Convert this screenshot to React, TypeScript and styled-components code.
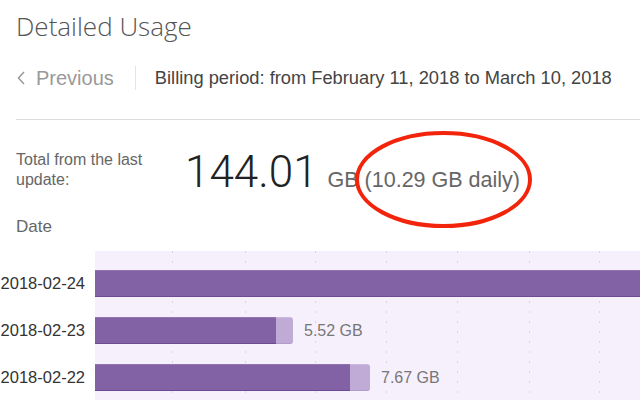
import React from 'react';
import styled, { createGlobalStyle } from 'styled-components';

const GlobalStyle = createGlobalStyle`
  html, body {
    margin: 0;
    padding: 0;
    background: #fff;
    overflow: hidden;
  }
  body {
    font-family: 'Liberation Sans', Arial, sans-serif;
    color: #444;
  }
`;

const Page = styled.div`
  position: relative;
  width: 640px;
  height: 400px;
  overflow: hidden;
  box-sizing: border-box;
  padding: 11px 0 0 16px;
`;

const Title = styled.h1`
  margin: 0;
  font-family: 'Open Sans', 'Liberation Sans', sans-serif;
  font-weight: 300;
  font-size: 26px;
  line-height: 30px;
  color: #555;
`;

const NavRow = styled.div`
  display: flex;
  align-items: center;
  height: 24px;
  margin-top: 25px;
`;

const PrevLink = styled.a`
  display: flex;
  align-items: center;
  gap: 11px;
  font-size: 20px;
  color: #999;
  text-decoration: none;
  cursor: pointer;
  padding-left: 1px;
`;

const Separator = styled.div`
  width: 1px;
  align-self: stretch;
  background: #e4e4e4;
  margin: 0 19px 0 21px;
`;

const Period = styled.div`
  font-size: 18.3px;
  color: #444;
  white-space: nowrap;
`;

const Divider = styled.hr`
  border: 0;
  height: 1px;
  background: #dcdcdc;
  margin: 29px 0 0;
`;

const SummaryRow = styled.div`
  position: relative;
  display: flex;
  align-items: flex-start;
  margin-top: 30px;
`;

const TotalLabel = styled.div`
  width: 150px;
  margin-right: 19px;
  font-size: 16px;
  line-height: 20px;
  color: #666;
`;

const ValueGroup = styled.div`
  display: flex;
  align-items: baseline;
`;

const BigNumber = styled.span`
  font-family: Roboto, 'Liberation Sans', sans-serif;
  font-weight: 300;
  font-size: 44px;
  line-height: 44px;
  color: #222;
`;

const Unit = styled.span`
  font-size: 21.5px;
  color: #666;
  margin-left: 10px;
`;

const Annotation = styled.svg`
  position: absolute;
  left: 339px;
  top: -19px;
  pointer-events: none;
`;

const DateHeading = styled.div`
  margin-top: 23px;
  font-size: 17px;
  line-height: 20px;
  color: #666;
`;

const Chart = styled.div`
  display: grid;
  grid-template-columns: 95px 1fr;
  margin: 14px 0 0 -16px;
  height: 160px;
`;

const LabelCol = styled.div`
  display: flex;
  flex-direction: column;
  gap: 20px;
  padding-top: 19px;
`;

const DateLabel = styled.div`
  height: 27px;
  line-height: 27px;
  text-align: right;
  padding-right: 10px;
  font-size: 16.5px;
  color: #333;
  white-space: nowrap;
`;

const PlotCol = styled.div`
  position: relative;
  display: flex;
  flex-direction: column;
  gap: 20px;
  padding-top: 19px;
  background: #f6f0fd;
  overflow: hidden;
`;

const GridLines = styled.svg`
  position: absolute;
  inset: 0;
`;

const BarRow = styled.div`
  position: relative;
  display: flex;
  align-items: center;
  height: 27px;
`;

const Segment = styled.div<{ $light?: boolean }>`
  flex-shrink: 0;
  height: 100%;
  box-sizing: border-box;
  background: ${({ $light }) => ($light ? '#bfabd6' : '#8262a5')};
  border-top: 1px solid ${({ $light }) => ($light ? '#cbbadf' : '#9175b1')};
  border-bottom: 1px solid ${({ $light }) => ($light ? '#b29dcc' : '#6c4b93')};
  border-radius: ${({ $light }) => ($light ? '0 3px 3px 0' : '0')};
`;

const BarLabel = styled.span`
  flex-shrink: 0;
  margin-left: 11px;
  font-size: 16px;
  color: #777;
`;

const SCALE = 35.8;

const rows = [
  { date: '2018-02-24', down: 16.4, up: 0.9, labelled: false },
  { date: '2018-02-23', down: 5.05, up: 0.47, labelled: true },
  { date: '2018-02-22', down: 7.12, up: 0.55, labelled: true },
];

const gridX = [77, 150, 220, 291, 362, 434, 504];

const ChevronLeft = () => (
  <svg width="8" height="14" viewBox="0 0 8 14">
    <polyline points="7,1 1.5,7 7,13" fill="none" stroke="#999" strokeWidth="1.5" />
  </svg>
);

const App: React.FC = () => (
  <Page>
    <GlobalStyle />
    <Title>Detailed Usage</Title>

    <NavRow>
      <PrevLink>
        <ChevronLeft />
        Previous
      </PrevLink>
      <Separator />
      <Period>Billing period: from February 11, 2018 to March 10, 2018</Period>
    </NavRow>

    <Divider />

    <SummaryRow>
      <TotalLabel>Total from the last update:</TotalLabel>
      <ValueGroup>
        <BigNumber>144.01</BigNumber>
        <Unit>GB (10.29 GB daily)</Unit>
      </ValueGroup>
      <Annotation width="180" height="100" viewBox="0 0 180 100">
        <ellipse cx="88.5" cy="48.5" rx="86.5" ry="46.5" fill="none" stroke="#f2250c" strokeWidth="4" />
      </Annotation>
    </SummaryRow>

    <DateHeading>Date</DateHeading>

    <Chart>
      <LabelCol>
        {rows.map((r) => (
          <DateLabel key={r.date}>{r.date}</DateLabel>
        ))}
      </LabelCol>
      <PlotCol>
        <GridLines width="545" height="160">
          {gridX.map((x) => (
            <line key={x} x1={x + 0.5} y1="0" x2={x + 0.5} y2="160" stroke="#dcd4e6" strokeWidth="1" strokeDasharray="2 8" />
          ))}
        </GridLines>
        {rows.map((r) => (
          <BarRow key={r.date}>
            <Segment style={{ width: Math.round(r.down * SCALE) }} />
            <Segment $light style={{ width: Math.round(r.up * SCALE) }} />
            {r.labelled && <BarLabel>{(r.down + r.up).toFixed(2)} GB</BarLabel>}
          </BarRow>
        ))}
      </PlotCol>
    </Chart>
  </Page>
);

export default App;
